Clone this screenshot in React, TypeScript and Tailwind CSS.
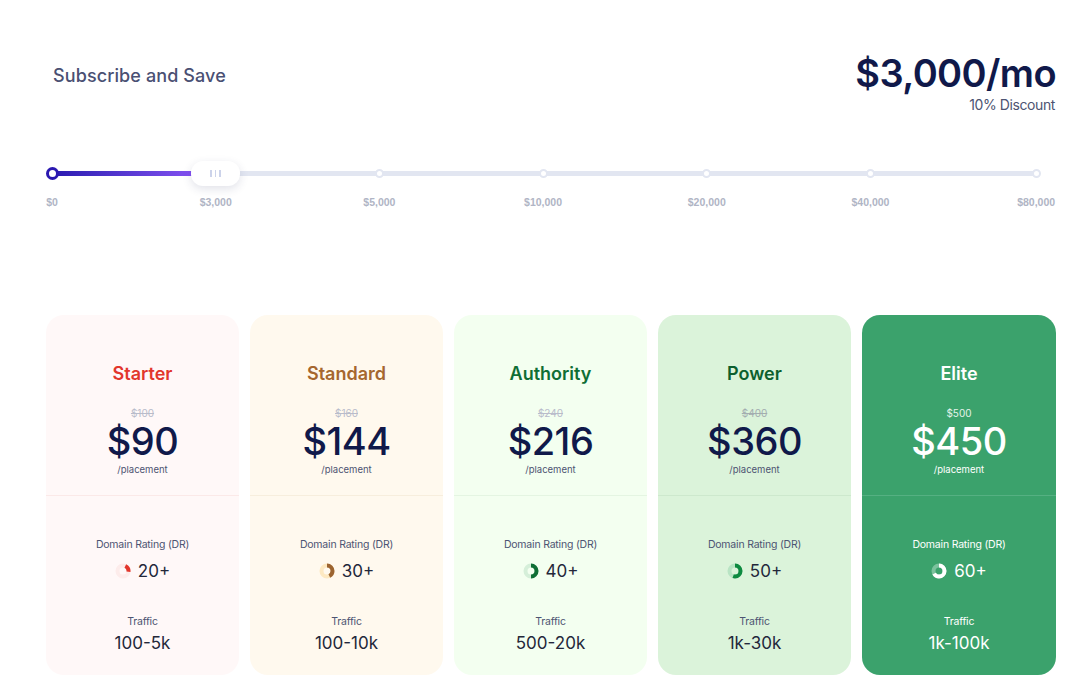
const plans = [
  { name: "Starter", was: "$100", price: "$90", dr: "20+", from: 25, sweep: 70, traffic: "100-5k", bg: "bg-[#fff8f8]", line: "border-[#fbe9e8]", title: "text-[#e2362c]", track: "#fdeceb", arc: "#e2362c", wasC: "text-[#b9bccb] line-through", priceC: "text-[#10194a]", sub: "text-[#4d5472]", val: "text-[#23273a]" },
  { name: "Standard", was: "$160", price: "$144", dr: "30+", from: 0, sweep: 150, traffic: "100-10k", bg: "bg-[#fff9ee]", line: "border-[#f7eedd]", title: "text-[#a5672f]", track: "#fde9c2", arc: "#9c6430", wasC: "text-[#b9bccb] line-through", priceC: "text-[#10194a]", sub: "text-[#4d5472]", val: "text-[#23273a]" },
  { name: "Authority", was: "$240", price: "$216", dr: "40+", from: 0, sweep: 175, traffic: "500-20k", bg: "bg-[#f3fff0]", line: "border-[#e4f5e2]", title: "text-[#0f6e35]", track: "#d5efd9", arc: "#0f6e35", wasC: "text-[#b9bccb] line-through", priceC: "text-[#10194a]", sub: "text-[#4d5472]", val: "text-[#23273a]" },
  { name: "Power", was: "$400", price: "$360", dr: "50+", from: 0, sweep: 195, traffic: "1k-30k", bg: "bg-[#dbf3da]", line: "border-[#cde8cd]", title: "text-[#0c5f2e]", track: "#b9e4c4", arc: "#0d8a40", wasC: "text-[#a3adb0] line-through", priceC: "text-[#10194a]", sub: "text-[#4d5472]", val: "text-[#23273a]" },
  { name: "Elite", was: "$500", price: "$450", dr: "60+", from: 0, sweep: 235, traffic: "1k-100k", bg: "bg-[#3ba26c]", line: "border-[#55b082]", title: "text-white", track: "#7cc29d", arc: "#ffffff", wasC: "text-[#e4f3ea]", priceC: "text-white", sub: "text-white", val: "text-white" },
];

const stops = ["$0", "$3,000", "$5,000", "$10,000", "$20,000", "$40,000", "$80,000"];

const Donut = ({ from, sweep, track, arc }: { from: number; sweep: number; track: string; arc: string }) => {
  const r = 5.5;
  const c = 2 * Math.PI * r;
  return (
    <svg width="16" height="16" viewBox="0 0 16 16">
      <circle cx="8" cy="8" r={r} fill="none" stroke={track} strokeWidth="4" />
      <circle
        cx="8"
        cy="8"
        r={r}
        fill="none"
        stroke={arc}
        strokeWidth="4"
        strokeDasharray={`${(c * sweep) / 360} ${c}`}
        transform={`rotate(${from - 90} 8 8)`}
      />
    </svg>
  );
};

export default function App() {
  return (
    <div className="bg-white min-h-[698px] pl-[46px] pr-[19px] pt-[52px] font-['Inter',sans-serif]">
      <div className="flex justify-between items-start">
        <p className="pl-[7px] pt-[12px] text-[18px] leading-[24px] font-medium text-[#4a5073] tracking-[0.1px]">Subscribe and Save</p>
        <div className="text-right">
          <p className="text-[38px] leading-[42px] font-semibold text-[#10194a] tracking-[-0.6px]">$3,000/mo</p>
          <p className="mt-[2px] pr-px text-[14px] leading-[18px] text-[#4d5472] tracking-[-0.4px]">10% Discount</p>
        </div>
      </div>

      <div className="relative mt-[49px] h-[48px]">
        <div className="absolute left-[6px] right-[20px] top-[8px] h-[5px] bg-[#e2e6f1]" />
        <div className="absolute left-[6px] top-[8px] h-[5px] w-[140px] bg-gradient-to-r from-[#2a18b0] to-[#8250f0]" />
        <div className="grid grid-cols-[repeat(6,163.7px)_1fr] font-['Liberation_Sans',sans-serif]">
          {stops.map((s, i) => (
            <div key={s} className={`w-[12px] flex flex-col items-center relative ${i === 6 ? "ml-[2px]" : ""}`}>
              <div className="h-[21px] flex items-center">
                {i === 0 && <span className="w-[13px] h-[13px] shrink-0 rounded-full bg-white border-[3px] border-[#2a18b0] relative" />}
                {i > 1 && <span className="w-[9px] h-[9px] shrink-0 rounded-full bg-white border-2 border-[#e2e6f1] relative" />}
              </div>
              <span className="mt-[11px] whitespace-nowrap text-[10.5px] leading-[14px] font-bold text-[#b0b5c5]">{s}</span>
            </div>
          ))}
        </div>
        <div className="absolute left-[145px] top-[-2px] w-[49px] h-[25px] rounded-[12px] bg-white shadow-[0_3px_10px_rgba(40,50,100,0.14)] flex items-center justify-center gap-[3px]">
          <span className="w-[1.5px] h-[7px] bg-[#ccd3ea]" />
          <span className="w-[1.5px] h-[7px] bg-[#ccd3ea]" />
          <span className="w-[1.5px] h-[7px] bg-[#ccd3ea]" />
        </div>
      </div>

      <div className="mt-[104px] grid grid-cols-[repeat(4,193px)_194px] gap-[11px]">
        {plans.map((p) => (
          <div key={p.name} className={`h-[360px] rounded-[18px] text-center ${p.bg}`}>
            <div className={`h-[181px] border-b pt-[46px] ${p.line}`}>
              <p className={`text-[18px] leading-[26px] font-semibold ${p.title}`}>{p.name}</p>
              <p className={`mt-[20px] text-[10px] leading-[12px] ${p.wasC}`}>{p.was}</p>
              <p className={`text-[38px] leading-[44px] font-medium tracking-[-0.5px] ${p.priceC}`}>{p.price}</p>
              <p className={`mt-px text-[9.5px] leading-[12px] ${p.sub}`}>/placement</p>
            </div>
            <p className={`mt-[41px] text-[10.5px] leading-[16px] tracking-[-0.2px] ${p.sub}`}>Domain Rating (DR)</p>
            <div className={`mt-[6px] flex items-center justify-center gap-[7px] text-[17px] leading-[24px] ${p.val}`}>
              <Donut from={p.from} sweep={p.sweep} track={p.track} arc={p.arc} />
              <span>{p.dr}</span>
            </div>
            <p className={`mt-[31px] text-[10.5px] leading-[16px] tracking-[-0.2px] ${p.sub}`}>Traffic</p>
            <p className={`mt-[1px] text-[17px] leading-[24px] ${p.val}`}>{p.traffic}</p>
          </div>
        ))}
      </div>
    </div>
  );
}
